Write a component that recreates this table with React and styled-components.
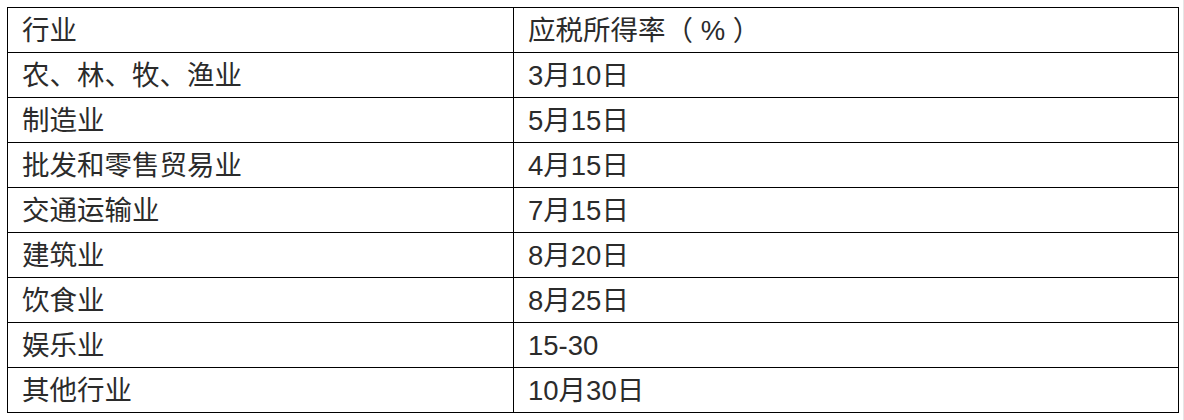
import React from 'react';
import styled, { createGlobalStyle } from 'styled-components';

const GlobalStyle = createGlobalStyle`
	html, body {
		margin: 0;
		padding: 0;
		background: #ffffff;
	}
	body {
		font-family: "Liberation Sans", "Noto Sans CJK SC", sans-serif;
	}
`;

const Page = styled.div`
	padding: 7px 0 0 7px;
	width: 1184px;
	height: 420px;
	box-sizing: border-box;
	position: relative;
`;

const Table = styled.table`
	border-collapse: collapse;
	width: 1172px;
	table-layout: fixed;
	color: #2b2b2b;
	font-size: 27.5px;
`;

const Row = styled.tr`
	height: 45px;
`;

const Cell = styled.td`
	border: 1px solid #000000;
	padding: 0 0 0 14px;
	width: ${(props) => props.w || 'auto'};
	line-height: 43px;
	white-space: nowrap;
	vertical-align: middle;
	box-sizing: border-box;
`;

const Gutter = styled.div`
	position: absolute;
	top: 0;
	right: 0;
	width: 1px;
	height: 100%;
	background: #e6e6e6;
`;

const rows = [
	['行业', '应税所得率（ % ）'],
	['农、林、牧、渔业', '3月10日'],
	['制造业', '5月15日'],
	['批发和零售贸易业', '4月15日'],
	['交通运输业', '7月15日'],
	['建筑业', '8月20日'],
	['饮食业', '8月25日'],
	['娱乐业', '15-30'],
	['其他行业', '10月30日'],
];

const App = () => (
	<>
		<GlobalStyle />
		<Page>
			<Table>
				<tbody>
					{rows.map(([industry, rate]) => (
						<Row key={industry}>
							<Cell w="506px">{industry}</Cell>
							<Cell>{rate}</Cell>
						</Row>
					))}
				</tbody>
			</Table>
			<Gutter />
		</Page>
	</>
);

export default App;
